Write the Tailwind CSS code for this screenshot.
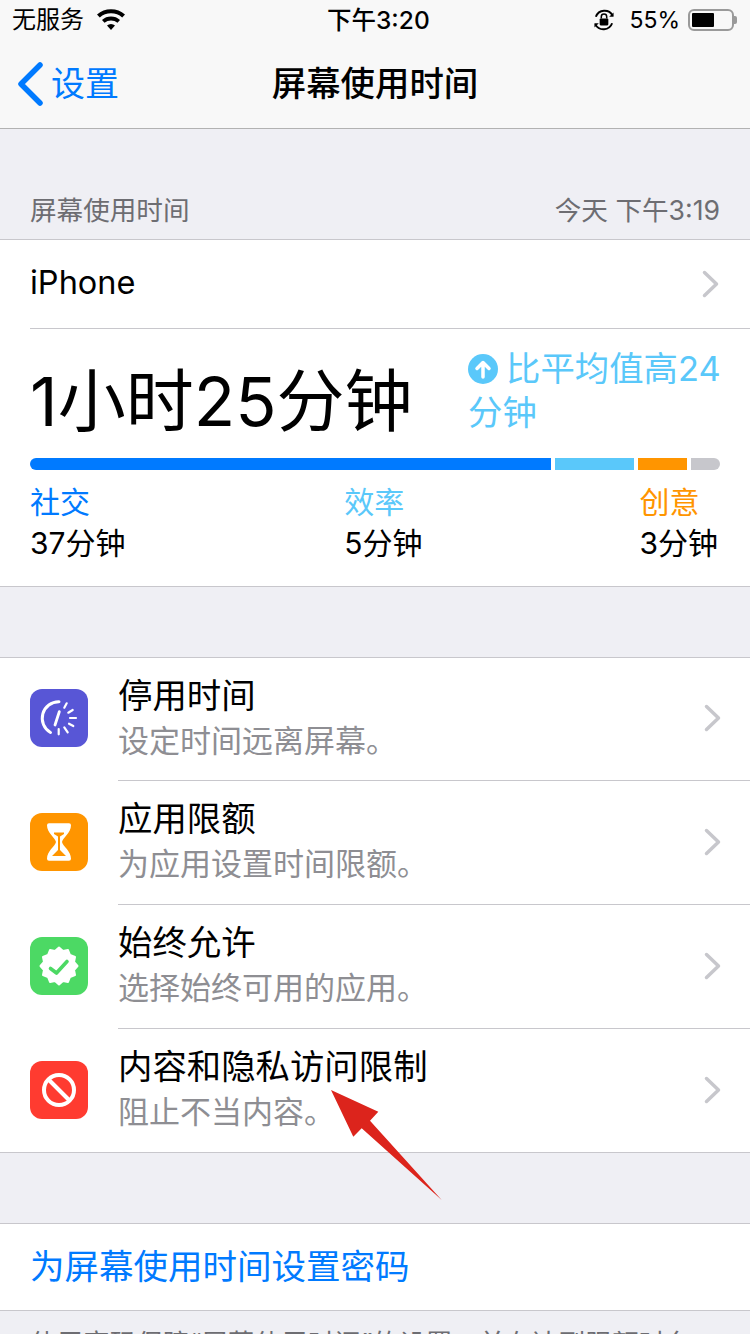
<!DOCTYPE html>
<html lang="zh-CN">
<head>
<meta charset="utf-8">
<script src="https://cdn.jsdelivr.net/npm/@tailwindcss/browser@4"></script>
</head>
<body class="m-0">
<div class="relative w-[750px] h-[1334px] overflow-hidden bg-[#efeff4] text-black font-['Inter','Noto_Sans_CJK_SC',sans-serif]">
  <header class="h-[129px] bg-[#f8f8f8] border-b border-[#b2b2b2]">
    <div class="relative h-10 flex items-center justify-between pl-3 pr-[13px]">
      <div class="flex items-center gap-3 text-[24px] leading-none">
        <span>无服务</span>
        <svg width="30" height="22" viewBox="0 0 30 22"><path d="M15 21 11 16.500a6 6 0 0 1 8 0ZM8.500 13.800 6 11a13.500 13.500 0 0 1 18 0l-2.500 2.800a10 10 0 0 0-13 0ZM3.800 8.500 1 5.500a21 21 0 0 1 28 0l-2.800 3a17 17 0 0 0-22.400 0Z" fill="#000"/></svg>
      </div>
      <div class="absolute left-[327px] top-[5px] text-[24.5px] leading-[30px] font-medium">下午3:20</div>
      <div class="flex items-center gap-[8px]">
        <svg width="24" height="26" viewBox="0 0 22 24" class="mr-[5px]"><path d="M3.500 9A8.500 8.500 0 0 1 19 8M18.500 15A8.500 8.500 0 0 1 3 16" fill="none" stroke="#000" stroke-width="1.800"/><path d="M19.800 5v4h-4zM2.200 19v-4h4z" fill="#000"/><rect x="7" y="10.500" width="8" height="6.500" rx="1" fill="#000"/><path d="M8.500 10.500V9a2.500 2.500 0 0 1 5 0v1.500" fill="none" stroke="#000" stroke-width="1.400"/></svg>
        <span class="text-[23px] leading-none">55%</span>
        <div class="flex items-center">
          <div class="w-[46px] h-[22px] rounded-[6px] border-2 border-[#9a9a9a] p-[2px]"><div class="w-[22px] h-full bg-black rounded-[1px]"></div></div>
          <div class="w-[3px] h-[8px] bg-[#9a9a9a] rounded-r-[2px]"></div>
        </div>
      </div>
    </div>
    <div class="relative h-[88px] flex items-center justify-center">
      <div class="absolute left-[17px] top-[22px] flex items-center gap-[6px] text-[#007aff]">
        <svg width="28" height="44" viewBox="0 0 28 44"><path d="M23 3 4 22l19 19" fill="none" stroke="#007aff" stroke-width="5.500" stroke-linecap="round" stroke-linejoin="round"/></svg>
        <span class="text-[34px] leading-[44px]">设置</span>
      </div>
      <h1 class="text-[34.4px] leading-[44px] font-medium">屏幕使用时间</h1>
    </div>
  </header>

  <section class="h-[110px] flex items-end justify-between px-[30px] pb-[11px] text-[26.6px] leading-[36px] text-[#6d6d72]">
    <span>屏幕使用时间</span>
    <span>今天 下午3:19</span>
  </section>

  <section class="bg-white border-y border-[#c8c7cc] h-[348px]">
    <div class="ml-[30px] h-[89px] border-b border-[#c8c7cc] flex items-center justify-between pr-[30px]">
      <span class="text-[32.5px] leading-[44px] mb-[2px]">iPhone</span>
      <svg class="mb-[1px]" width="18" height="28" viewBox="0 0 18 28"><path d="M2.500 2.500 14.500 14l-12 11.500" fill="none" stroke="#c7c7cc" stroke-width="3.500" stroke-linecap="round" stroke-linejoin="round"/></svg>
    </div>
    <div class="px-[30px]">
      <div class="relative h-[129px]">
        <div class="absolute left-0 top-[30px] text-[68px] leading-[84px] whitespace-nowrap">1小时25分钟</div>
        <div class="absolute left-[438px] top-[18px] w-[260px] text-[34.4px] leading-[44px] text-[#5ac8fa]">
          <svg class="inline-block align-[-3px] mr-[8px]" width="30" height="30" viewBox="0 0 30 30"><circle cx="15" cy="15" r="15" fill="#5ac8fa"/><path d="M15 23V9M9 14.500 15 8.500l6 6" fill="none" stroke="#fff" stroke-width="3.500" stroke-linecap="round" stroke-linejoin="round"/></svg><span>比平均值高24</span><br><span>分钟</span>
        </div>
      </div>
      <div class="flex h-3 gap-1 rounded-full overflow-hidden">
        <div class="w-[521px] bg-[#007aff]"></div>
        <div class="w-[79px] bg-[#5ac8fa]"></div>
        <div class="w-[49px] bg-[#ff9500]"></div>
        <div class="w-[29px] bg-[#c7c7cc]"></div>
      </div>
      <div class="flex justify-between pt-[10px] text-[30px] leading-[44px]">
        <div><div class="text-[#007aff]">社交</div><div class="-mt-[3px]">37分钟</div></div>
        <div class="ml-[2px]"><div class="text-[#5ac8fa]">效率</div><div class="-mt-[3px]">5分钟</div></div>
        <div class="mr-[2px]"><div class="text-[#ff9500]">创意</div><div class="-mt-[3px]">3分钟</div></div>
      </div>
    </div>
  </section>

  <div class="h-[70px]"></div>

  <section class="bg-white border-y border-[#c8c7cc]">
    <div class="flex h-[123px] items-center pl-[30px]">
      <svg class="shrink-0 mb-[3px]" width="58" height="58" viewBox="0 0 58 58"><rect width="58" height="58" rx="12" fill="#5856d6"/><path d="M29 12.700A16.500 16.500 0 0 0 20.500 43.500" fill="none" stroke="#fff" stroke-width="3" stroke-linecap="round"/><path d="M29.300 22.700 25 36" fill="none" stroke="#fff" stroke-width="2.800" stroke-linecap="round"/><path d="M36.700 14.300 34.300 18.700M42.700 21 38.300 23.700M46 29H40M43.300 37 39 34.700M37.700 43.300 34.300 38.300M28.700 45.300V40" fill="none" stroke="#fff" stroke-width="2.200" stroke-linecap="round"/></svg>
      <div class="ml-[30px] flex-1 h-full border-b border-[#c8c7cc] flex items-center justify-between pr-[28px]">
        <div class="pb-[4px]"><div class="text-[34.4px] leading-[46px]">停用时间</div><div class="text-[31px] leading-[43px] text-[#8e8e93]">设定时间远离屏幕。</div></div>
        <svg class="mb-[2px]" width="18" height="28" viewBox="0 0 18 28"><path d="M2.500 2.500 14.500 14l-12 11.500" fill="none" stroke="#c7c7cc" stroke-width="3.500" stroke-linecap="round" stroke-linejoin="round"/></svg>
      </div>
    </div>
    <div class="flex h-[124px] items-center pl-[30px]">
      <svg class="shrink-0 mb-[2px]" width="58" height="58" viewBox="0 0 58 58"><rect width="58" height="58" rx="12" fill="#ff9500"/><path d="M19 10.300h20a2 2 0 0 1 2 2c0 8-8 12-9 16.700 1 4.700 9 8.700 9 16.700a2 2 0 0 1-2 2H19a2 2 0 0 1-2-2c0-8 8-12 9-16.700-1-4.700-9-8.700-9-16.700a2 2 0 0 1 2-2Z" fill="#fff"/><path d="M24 19.500h10v1.500l-4 2.500V37l6 6H22l6-6V23.500l-4-2.500Z" fill="#ff9500"/></svg>
      <div class="ml-[30px] flex-1 h-full border-b border-[#c8c7cc] flex items-center justify-between pr-[28px]">
        <div class="pb-[4px]"><div class="text-[34.4px] leading-[46px]">应用限额</div><div class="text-[31px] leading-[43px] text-[#8e8e93]">为应用设置时间限额。</div></div>
        <svg class="mb-[1px]" width="18" height="28" viewBox="0 0 18 28"><path d="M2.500 2.500 14.500 14l-12 11.500" fill="none" stroke="#c7c7cc" stroke-width="3.500" stroke-linecap="round" stroke-linejoin="round"/></svg>
      </div>
    </div>
    <div class="flex h-[124px] items-center pl-[30px]">
      <svg class="shrink-0 mb-[2px]" width="58" height="58" viewBox="0 0 58 58"><rect width="58" height="58" rx="12" fill="#4cd964"/><path d="M29 10.500 33 14 38 13 40 18 45 20 44 25 47.500 29 44 33 45 38 40 40 38 45 33 44 29 47.500 25 44 20 45 18 40 13 38 14 33 10.500 29 14 25 13 20 18 18 20 13 25 14Z" fill="#fff" stroke="#fff" stroke-width="2" stroke-linejoin="round"/><path d="M20.500 31.500 26.500 36 37 24.500" fill="none" stroke="#4cd964" stroke-width="3.600" stroke-linecap="round" stroke-linejoin="round"/></svg>
      <div class="ml-[30px] flex-1 h-full border-b border-[#c8c7cc] flex items-center justify-between pr-[28px]">
        <div class="pb-[4px]"><div class="text-[34.4px] leading-[46px]">始终允许</div><div class="text-[31px] leading-[43px] text-[#8e8e93]">选择始终可用的应用。</div></div>
        <svg class="mb-[1px]" width="18" height="28" viewBox="0 0 18 28"><path d="M2.500 2.500 14.500 14l-12 11.500" fill="none" stroke="#c7c7cc" stroke-width="3.500" stroke-linecap="round" stroke-linejoin="round"/></svg>
      </div>
    </div>
    <div class="flex h-[123px] items-center pl-[30px]">
      <svg class="shrink-0 mb-[1px]" width="58" height="58" viewBox="0 0 58 58"><rect width="58" height="58" rx="12" fill="#ff3b30"/><circle cx="29" cy="29" r="15" fill="none" stroke="#fff" stroke-width="4"/><path d="M18.500 18.500 39.500 39.500" stroke="#fff" stroke-width="4"/></svg>
      <div class="ml-[30px] flex-1 h-full flex items-center justify-between pr-[28px]">
        <div class="pb-[4px]"><div class="text-[34.4px] leading-[46px]">内容和隐私访问限制</div><div class="text-[31px] leading-[43px] text-[#8e8e93]">阻止不当内容。</div></div>
        <svg class="mb-[1px]" width="18" height="28" viewBox="0 0 18 28"><path d="M2.500 2.500 14.500 14l-12 11.500" fill="none" stroke="#c7c7cc" stroke-width="3.500" stroke-linecap="round" stroke-linejoin="round"/></svg>
      </div>
    </div>
  </section>

  <div class="h-[70px]"></div>

  <section class="bg-white border-y border-[#c8c7cc] h-[88px] flex items-center px-[30px]">
    <span class="text-[34.5px] leading-[44px] text-[#007aff]">为屏幕使用时间设置密码</span>
  </section>
  <p class="px-[30px] pt-[14px] text-[26.6px] leading-[36px] text-[#6d6d72] whitespace-nowrap">使用密码保障“屏幕使用时间”的设置，并在达到限额时允</p>

  <svg class="absolute left-[330px] top-[1088px]" width="114" height="114" viewBox="0 0 114 114"><path d="M1 2 48.300 23.700 40 32.700 111.700 112 31.700 40.300 23.300 48.700Z" fill="#dc241c"/></svg>
</div>
</body>
</html>
